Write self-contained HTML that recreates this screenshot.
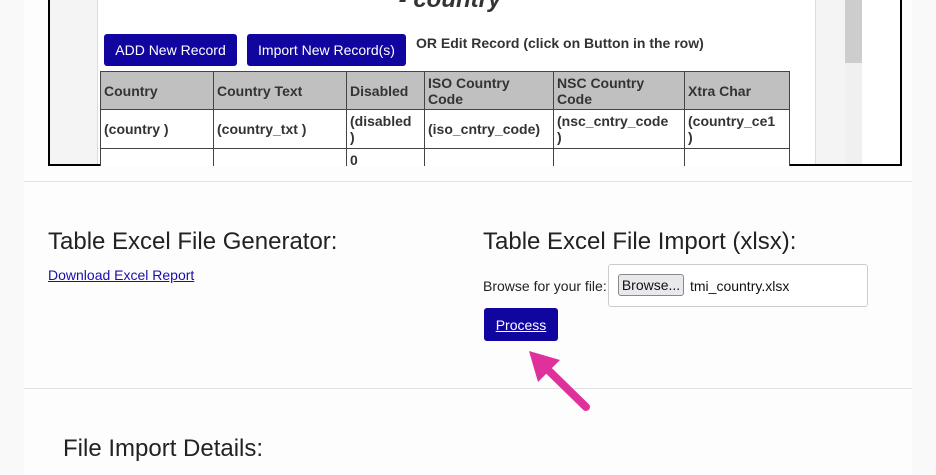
<!DOCTYPE html>
<html><head><style>
body{margin:0;width:936px;height:475px;overflow:hidden;background:#f9f9f9;font-family:"Liberation Sans",Arial,sans-serif;position:relative}
.a{position:absolute}
.btn{position:absolute;background:#10069f;color:#fff;border-radius:3px;font-size:14px;display:flex;align-items:center;justify-content:center}
table{border-collapse:collapse;font-size:14px;font-weight:bold;color:#333}
td{border:1px solid #444;padding:0 3px;line-height:16px;vertical-align:middle}
</style></head><body>
<div class="a" style="left:24px;top:0;width:888px;height:475px;background:#fdfdfd"></div>
<div class="a" style="left:48px;top:-2px;width:850px;height:166px;border:2px solid #000;border-top:none;background:#fff;overflow:hidden">
 <div class="a" style="left:0;top:0;width:47px;height:166px;background:#f4f4f4;border-right:1px solid #ddd"></div>
 <div class="a" style="left:765px;top:0;width:30px;height:166px;background:#f4f4f4;border-left:1px solid #ddd"></div>
 <div class="a" style="left:795px;top:0;width:17px;height:166px;background:#f0f0f0"></div>
 <div class="a" style="left:795px;top:0;width:17px;height:65px;background:#cdcdcd"></div>
 <div class="a" style="left:300px;top:-12px;width:200px;text-align:center;font-size:24px;font-weight:bold;font-style:italic;color:#333">- country</div>
</div>
<div class="btn" style="left:104px;top:34px;width:133px;height:32px">ADD New Record</div>
<div class="btn" style="left:247px;top:34px;width:159px;height:32px">Import New Record(s)</div>
<div class="a" style="left:416px;top:35px;font-size:14px;font-weight:bold;color:#333">OR Edit Record (click on Button in the row)</div>
<div class="a" style="left:100px;top:71px;height:95px;overflow:hidden">
<table>
<tr style="background:#c0c0c0;height:38px"><td style="width:106px">Country</td><td style="width:126px">Country Text</td><td style="width:71px">Disabled</td><td style="width:122px">ISO Country<br>Code</td><td style="width:124px">NSC Country<br>Code</td><td style="width:98px">Xtra Char</td></tr>
<tr style="background:#fff;height:39px"><td>(country )</td><td>(country_txt )</td><td>(disabled<br>)</td><td>(iso_cntry_code)</td><td>(nsc_cntry_code<br>)</td><td>(country_ce1<br>)</td></tr>
<tr style="background:#fff;height:20px"><td></td><td></td><td style="vertical-align:bottom">0</td><td></td><td></td><td></td></tr>
</table></div>
<div class="a" style="left:24px;top:181px;width:888px;height:1px;background:#e2e2e2"></div>
<div class="a" style="left:24px;top:388px;width:888px;height:1px;background:#e2e2e2"></div>
<div class="a" style="left:48px;top:228px;font-size:24px;color:#222">Table Excel File Generator:</div>
<div class="a" style="left:48px;top:267px;font-size:14px;color:#1a0dab;text-decoration:underline">Download Excel Report</div>
<div class="a" style="left:483px;top:228px;font-size:24px;color:#222">Table Excel File Import (xlsx):</div>
<div class="a" style="left:483px;top:278px;font-size:14px;color:#222">Browse for your file:</div>
<div class="a" style="left:608px;top:264px;width:258px;height:41px;border:1px solid #ccc;border-radius:3px;background:#fff"></div>
<div class="a" style="left:618px;top:274px;width:64px;height:20px;border:1px solid #888;border-radius:3px;background:#e9e9ed;font-size:14px;text-align:center;line-height:20px;color:#111">Browse...</div>
<div class="a" style="left:690px;top:278px;font-size:14px;color:#111">tmi_country.xlsx</div>
<div class="btn" style="left:484px;top:308px;width:74px;height:33px;text-decoration:underline">Process</div>
<svg class="a" style="left:520px;top:340px" width="80" height="80"><line x1="66" y1="67" x2="22" y2="24" stroke="#e0309a" stroke-width="8" stroke-linecap="round"/><polygon points="9,11 40,20 18,42" fill="#e0309a"/></svg>
<div class="a" style="left:63px;top:435px;font-size:24px;color:#222">File Import Details:</div>
</body></html>
